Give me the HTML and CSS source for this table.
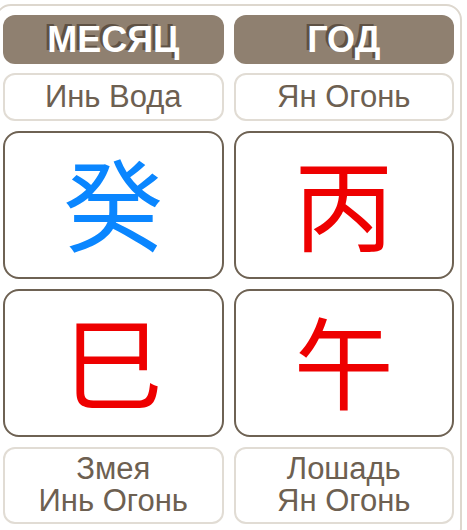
FILE: index.html
```html
<!DOCTYPE html>
<html lang="ru">
<head>
<meta charset="utf-8">
<title>Бацзы</title>
<link rel="stylesheet" href="styles.css">
</head>
<body>
<div class="panel">
  <div class="grid">
    <div class="pill">МЕСЯЦ</div>
    <div class="pill">ГОД</div>
    <div class="label">Инь Вода</div>
    <div class="label">Ян Огонь</div>
    <div class="glyph"><span class="water">癸</span></div>
    <div class="glyph"><span class="fire">丙</span></div>
    <div class="glyph"><span class="fire">巳</span></div>
    <div class="glyph"><span class="fire">午</span></div>
    <div class="label two">Змея<br>Инь Огонь</div>
    <div class="label two">Лошадь<br>Ян Огонь</div>
  </div>
</div>
</body>
</html>
```
FILE: styles.css
```css
html, body {
  margin: 0;
  padding: 0;
  background: #ffffff;
  overflow: hidden;
}
body {
  width: 467px;
  height: 530px;
  font-family: "Liberation Sans", Arial, sans-serif;
}
.panel {
  box-sizing: border-box;
  width: 467px;
  height: 540px;
  margin: 4px 0 0 -5px;
  border: 2px solid #ddd7ce;
  border-radius: 16px;
  padding: 9px 6px 0 6px;
}
.grid {
  display: grid;
  grid-template-columns: 1fr 1fr;
  column-gap: 10px;
  row-gap: 10px;
}
.pill {
  height: 49px;
  line-height: 49px;
  background: #8f8070;
  border-radius: 12px;
  color: #ffffff;
  font-weight: bold;
  font-size: 36px;
  text-align: center;
  text-shadow: -3px -2px 0 #5e5144;
  margin-bottom: -1px;
}
.label {
  box-sizing: border-box;
  border: 2px solid #e1dcd4;
  border-radius: 12px;
  background: #ffffff;
  color: #6d6051;
  font-size: 31px;
  line-height: 32px;
  text-align: center;
  padding: 6px 0 6px 0;
}
.label.two {
  padding: 4px 0 5px 0;
}
.glyph {
  box-sizing: border-box;
  height: 148px;
  border: 2px solid #6e6253;
  border-radius: 16px;
  background: #ffffff;
  display: flex;
  align-items: center;
  justify-content: center;
  padding-bottom: 8px;
  font-family: "Noto Sans CJK SC", "Noto Sans CJK JP", sans-serif;
  font-size: 100px;
  line-height: 1;
}
.water { color: #0a86ff; }
.fire { color: #ee0000; }
```
